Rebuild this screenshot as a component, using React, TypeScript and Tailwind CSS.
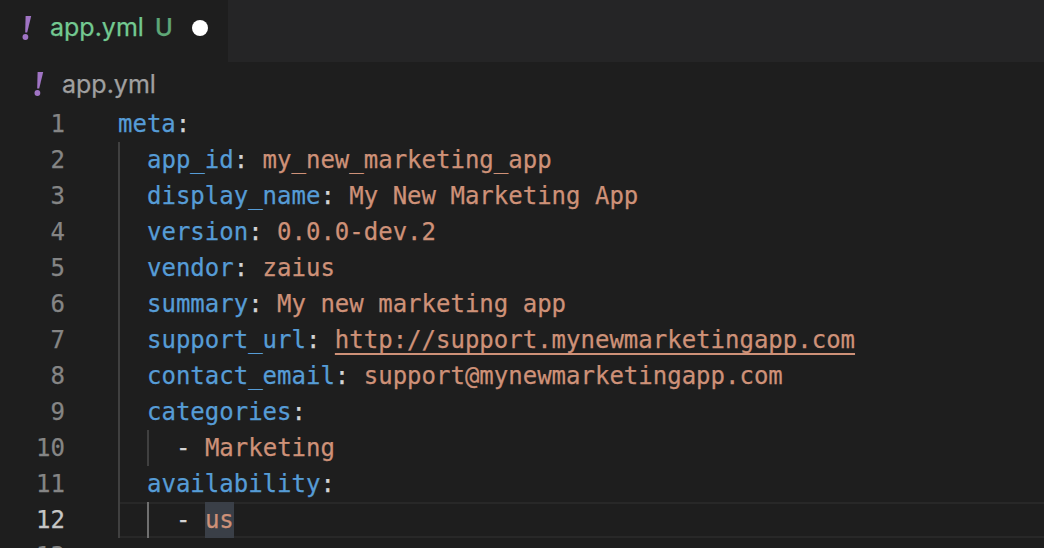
const Bang = () => (
  <svg width="14" height="26" viewBox="0 0 14 26" className="shrink-0" fill="#a074c4">
    <path d="M4.6 1h5.6L6.2 17.5H4.2z" />
    <circle cx="4.4" cy="22" r="2.9" />
  </svg>
);

type Seg = { text: string; kind: "key" | "val" | "plain" | "link" | "hit" };

type Row = { guides: number; segs: Seg[]; active?: boolean };

const rows: Row[] = [
  { guides: 0, segs: [{ text: "meta", kind: "key" }, { text: ":", kind: "plain" }] },
  { guides: 1, segs: [{ text: "app_id", kind: "key" }, { text: ": ", kind: "plain" }, { text: "my_new_marketing_app", kind: "val" }] },
  { guides: 1, segs: [{ text: "display_name", kind: "key" }, { text: ": ", kind: "plain" }, { text: "My New Marketing App", kind: "val" }] },
  { guides: 1, segs: [{ text: "version", kind: "key" }, { text: ": ", kind: "plain" }, { text: "0.0.0-dev.2", kind: "val" }] },
  { guides: 1, segs: [{ text: "vendor", kind: "key" }, { text: ": ", kind: "plain" }, { text: "zaius", kind: "val" }] },
  { guides: 1, segs: [{ text: "summary", kind: "key" }, { text: ": ", kind: "plain" }, { text: "My new marketing app", kind: "val" }] },
  { guides: 1, segs: [{ text: "support_url", kind: "key" }, { text: ": ", kind: "plain" }, { text: "http://support.mynewmarketingapp.com", kind: "link" }] },
  { guides: 1, segs: [{ text: "contact_email", kind: "key" }, { text: ": ", kind: "plain" }, { text: "support@mynewmarketingapp.com", kind: "val" }] },
  { guides: 1, segs: [{ text: "categories", kind: "key" }, { text: ":", kind: "plain" }] },
  { guides: 2, segs: [{ text: "- ", kind: "plain" }, { text: "Marketing", kind: "val" }] },
  { guides: 1, segs: [{ text: "availability", kind: "key" }, { text: ":", kind: "plain" }] },
  { guides: 2, active: true, segs: [{ text: "- ", kind: "plain" }, { text: "us", kind: "hit" }] },
];

const segClass = {
  key: "text-[#569cd6]",
  val: "text-[#ce9178]",
  plain: "text-[#d4d4d4]",
  link: "text-[#ce9178] underline decoration-2 underline-offset-[5px]",
  hit: "inline-block h-9 text-[#ce9178] bg-[#3a3f47]",
};

const App = () => {
  return (
    <div className="w-[1044px] h-[548px] overflow-hidden bg-[#1e1e1e] [font-family:'DejaVu_Sans_Mono',monospace] [-webkit-text-stroke:0.25px]">
      <div className="flex h-[62px] bg-[#252526]">
        <div className="flex h-[62px] w-[228px] items-center bg-[#1e1e1e] pb-[7px] pl-[21px] [font-family:Inter,sans-serif]">
          <Bang />
          <span className="ml-[15px] text-[25px] text-[#73c991]">app.yml</span>
          <span className="ml-[11px] text-[24px] font-medium text-[#5fa777]">U</span>
          <span className="ml-[19px] h-4 w-4 rounded-full bg-white" />
        </div>
      </div>
      <div className="flex h-[44px] items-center pl-[33px] [font-family:Inter,sans-serif]">
        <Bang />
        <span className="ml-[15px] mt-0.5 text-[25px] text-[#a0a0a0]">app.yml</span>
      </div>
      {rows.map((row, i) => (
        <div key={i} className="flex h-9 text-[24px] leading-9">
          <span className={`w-[65px] text-right ${row.active ? "text-[#c6c6c6]" : "text-[#858585]"}`}>{i + 1}</span>
          <div className="ml-[53px] flex flex-1">
            {i > 0 && (
              <div className={`flex flex-1 ${row.active ? "border-y-2 border-[#282828]" : ""}`}>
                <span className={`h-9 w-[29px] shrink-0 border-l-2 border-[#404040] ${row.active ? "-my-0.5" : ""}`} />
                {row.guides === 2 && (
                  <span className={`h-9 w-[29px] shrink-0 border-l-2 ${row.active ? "-my-0.5 border-[#707070]" : "border-[#404040]"}`} />
                )}
                <span className={`whitespace-pre ${row.active ? "-my-0.5" : ""}`}>
                  {row.segs.map((s, j) => (
                    <span key={j} className={segClass[s.kind]}>{s.text}</span>
                  ))}
                </span>
              </div>
            )}
            {i === 0 && (
              <span className="whitespace-pre">
                {row.segs.map((s, j) => (
                  <span key={j} className={segClass[s.kind]}>{s.text}</span>
                ))}
              </span>
            )}
          </div>
        </div>
      ))}
      <div className="flex h-9 text-[24px] leading-9">
        <span className="w-[65px] text-right text-[#858585]">13</span>
      </div>
    </div>
  );
};

export default App;
